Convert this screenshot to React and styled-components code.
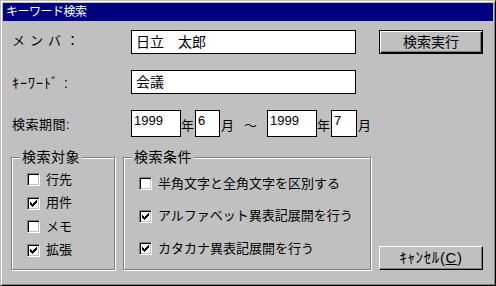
import React from 'react';
import styled, { createGlobalStyle } from 'styled-components';

const GlobalStyle = createGlobalStyle`
  html, body {
    margin: 0;
    padding: 0;
    background: #c0c0c0;
  }
  * {
    box-sizing: border-box;
  }
`;

const FONT = `"Liberation Sans", "Noto Sans CJK JP", sans-serif`;

// ウィンドウ外枠
const Window = styled.div`
  width: 496px;
  height: 286px;
  background: #c0c0c0;
  border: 1px solid;
  border-color: #c0c0c0 #000 #000 #c0c0c0;
  box-shadow: inset 1px 1px 0 #fff, inset -1px -1px 0 #808080;
  padding: 2px;
  font-family: ${FONT};
  color: #000;
  display: flex;
  flex-direction: column;
`;

const TitleBar = styled.div`
  height: 18px;
  background: #000080;
  color: #fff;
  font-size: 12px;
  line-height: 18px;
  padding-left: 3px;
  letter-spacing: -0.5px;
`;

const Body = styled.div`
  flex: 1;
  display: grid;
  grid-template-columns: 361px 104px;
  column-gap: 7px;
  padding: 9px 0 0 8px;
`;

const Main = styled.div`
  display: flex;
  flex-direction: column;
`;

const Row = styled.div`
  display: flex;
  align-items: center;
  height: ${({ h }) => h || 24}px;
  margin-bottom: 16px;
`;

const Label = styled.div`
  width: 120px;
  padding-left: 1px;
  font-size: ${({ fs }) => fs || 13}px;
  line-height: 16px;
  letter-spacing: ${({ spacing }) => spacing || 0}px;
  margin-top: ${({ shift }) => shift || 0}px;
`;

const TextBox = styled.div`
  width: ${({ w }) => w}px;
  height: ${({ h }) => h || 24}px;
  background: #fff;
  border: 1px solid #000;
  font-size: ${({ fs }) => fs || 13}px;
  line-height: 16px;
  padding: ${({ pad }) => pad || '3px 0 0 4px'};
  white-space: pre;
`;

const Unit = styled.span`
  display: inline-block;
  width: ${({ w }) => w}px;
  margin-left: ${({ ml }) => ml || 0}px;
  font-size: 13px;
  line-height: 16px;
  text-align: ${({ align }) => align || 'left'};
  margin-top: 4px;
`;

const Groups = styled.div`
  display: flex;
  gap: 8px;
  margin-top: 4px;
`;

const Frame = styled.div`
  position: relative;
  width: ${({ w }) => w}px;
  height: 113px;
  border: 1px solid #808080;
  box-shadow: 1px 1px 0 #fff, inset 1px 1px 0 #fff;
  padding: ${({ pt }) => pt}px 0 0 15px;
  display: flex;
  flex-direction: column;
  gap: ${({ gap }) => gap}px;
`;

const Legend = styled.span`
  position: absolute;
  top: -10px;
  left: 8px;
  padding: 0 2px;
  background: #c0c0c0;
  font-size: 14px;
  line-height: 18px;
  letter-spacing: 0.5px;
`;

const CheckRow = styled.div`
  display: flex;
  align-items: center;
  gap: 6px;
  height: 13px;
  font-size: 13px;
  line-height: 16px;
`;

const Box = styled.span`
  width: 13px;
  height: 13px;
  flex: none;
  background: #fff;
  border: 1px solid;
  border-color: #808080 #fff #fff #808080;
  box-shadow: inset 1px 1px 0 #000, inset -1px -1px 0 #c0c0c0;
  display: flex;
  align-items: center;
  justify-content: center;
`;

const Side = styled.div`
  display: flex;
  flex-direction: column;
  justify-content: space-between;
  padding-bottom: 13px;
`;

const Button = styled.div`
  width: 104px;
  height: 24px;
  display: flex;
  align-items: center;
  justify-content: center;
  background: #c0c0c0;
  font-size: ${({ fs }) => fs || 14}px;
  letter-spacing: ${({ spacing }) => spacing || 0}px;
  line-height: 16px;
  border: 1px solid;
  border-color: ${({ primary }) => (primary ? '#000' : '#fff #000 #000 #fff')};
  box-shadow: ${({ primary }) =>
    primary
      ? 'inset 1px 1px 0 #fff, inset -1px -1px 0 #000, inset -2px -2px 0 #808080'
      : 'inset -1px -1px 0 #808080'};
`;

const Mnemonic = styled.span`
  text-decoration: underline;
`;

const Check = () => (
  <svg width="7" height="7" viewBox="0 0 7 7" shapeRendering="crispEdges">
    <path d="M6 0h1v3h-1v1h-1v1h-1v1h-1v1h-1v-1h-1v-1h-1v-3h1v1h1v1h1v-1h1v-1h1z" fill="#000" />
  </svg>
);

const CheckItem = ({ checked, children }) => (
  <CheckRow>
    <Box>{checked && <Check />}</Box>
    <span>{children}</span>
  </CheckRow>
);

const targets = [
  { label: '行先', checked: false },
  { label: '用件', checked: true },
  { label: 'メモ', checked: false },
  { label: '拡張', checked: true },
];

const conditions = [
  { label: '半角文字と全角文字を区別する', checked: false },
  { label: 'アルファベット異表記展開を行う', checked: true },
  { label: 'カタカナ異表記展開を行う', checked: true },
];

export default function App() {
  return (
    <>
      <GlobalStyle />
      <Window>
        <TitleBar>キーワード検索</TitleBar>
        <Body>
          <Main>
            <Row>
              <Label spacing={5} shift={-3}>メンバ：</Label>
              <TextBox w={225} fs={14}>{'日立　太郎'}</TextBox>
            </Row>
            <Row>
              <Label fs={14} spacing={1} shift={2}>ｷｰﾜｰﾄﾞ :</Label>
              <TextBox w={225} fs={14}>会議</TextBox>
            </Row>
            <Row h={27}>
              <Label spacing={0.5} shift={3}>検索期間:</Label>
              <TextBox w={50} h={27} pad="2px 0 0 2px">1999</TextBox>
              <Unit w={14}>年</Unit>
              <TextBox w={25} h={27} pad="2px 0 0 2px">6</TextBox>
              <Unit w={13} ml={1}>月</Unit>
              <Unit w={33} align="center">～</Unit>
              <TextBox w={50} h={27} pad="2px 0 0 2px">1999</TextBox>
              <Unit w={14}>年</Unit>
              <TextBox w={26} h={27} pad="2px 0 0 2px">7</TextBox>
              <Unit w={13} ml={1}>月</Unit>
            </Row>
            <Groups>
              <Frame w={104} pt={15} gap={10.5}>
                <Legend>検索対象</Legend>
                {targets.map((t) => (
                  <CheckItem key={t.label} checked={t.checked}>{t.label}</CheckItem>
                ))}
              </Frame>
              <Frame w={248} pt={19} gap={19.5}>
                <Legend>検索条件</Legend>
                {conditions.map((c) => (
                  <CheckItem key={c.label} checked={c.checked}>{c.label}</CheckItem>
                ))}
              </Frame>
            </Groups>
          </Main>
          <Side>
            <Button primary>検索実行</Button>
            <Button fs={15} spacing={0.6}>
              ｷｬﾝｾﾙ(<Mnemonic>C</Mnemonic>)
            </Button>
          </Side>
        </Body>
      </Window>
    </>
  );
}
